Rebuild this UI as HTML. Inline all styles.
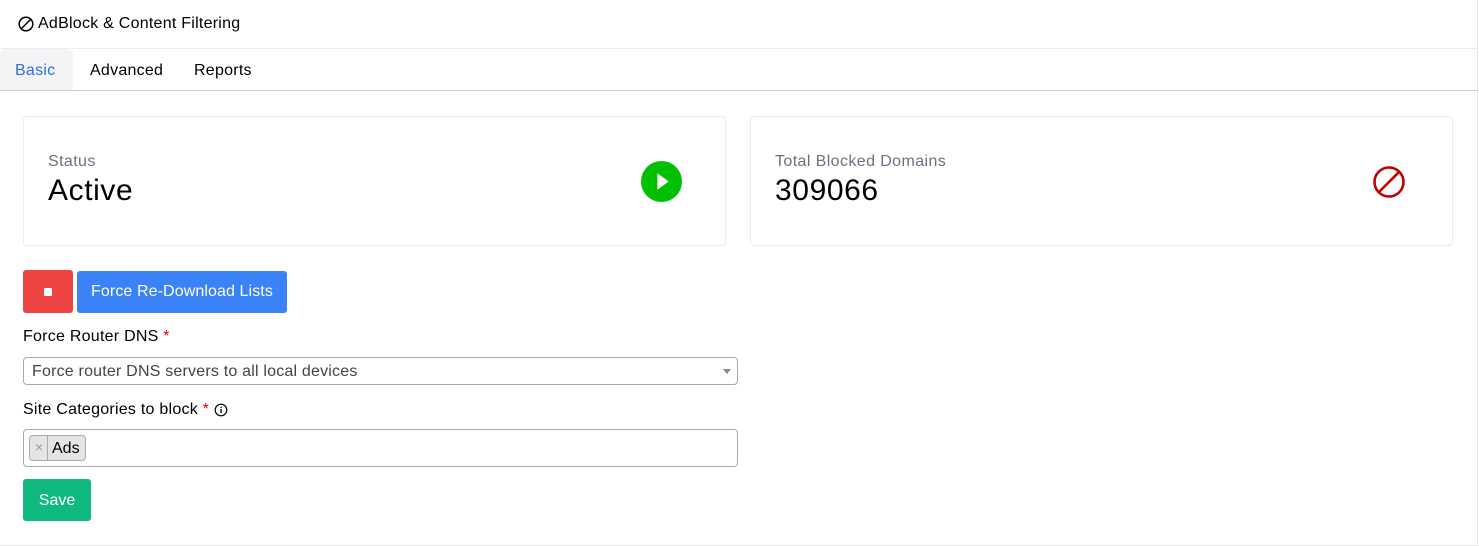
<!DOCTYPE html>
<html><head><style>
*{box-sizing:border-box;margin:0;padding:0}
body{width:1479px;height:546px;background:#fff;font-family:"Liberation Sans",Arial,sans-serif;position:relative;overflow:hidden;color:#000}
.abs{position:absolute}
.card{position:absolute;top:116px;height:130px;border:1px solid #ececec;border-radius:4px;background:#fff}
.lbl{position:absolute;left:24px;top:36px;font-size:16px;color:#6b7280;letter-spacing:.4px}
.val{position:absolute;left:24px;top:57px;font-size:30px;color:#000;letter-spacing:.6px}
.t{letter-spacing:.25px}
</style></head><body>
<div class="abs" style="right:1px;top:0;width:1px;height:546px;background:#e5e5e5"></div>
<div class="abs" style="left:0;top:545px;width:1479px;height:1px;background:#e5e5e5"></div>
<div class="abs t" style="left:18px;top:15px;font-size:16px;display:flex;align-items:center">
<svg width="16" height="16" viewBox="0 0 16 16" style="margin-right:4px"><circle cx="8" cy="8" r="6.8" fill="none" stroke="#000" stroke-width="1.5"/><line x1="3.5" y1="12.5" x2="12.5" y2="3.5" stroke="#000" stroke-width="1.5"/></svg>AdBlock &amp; Content Filtering</div>
<div class="abs" style="left:0;top:48px;width:1478px;height:1px;background:#eee"></div>
<div class="abs" style="left:0;top:49px;width:73px;height:41px;background:#f3f4f6;border-radius:6px 6px 0 0"></div>
<div class="abs" style="left:0;top:90px;width:1478px;height:1px;background:#ccc"></div>
<div class="abs t" style="left:15px;top:62px;font-size:16px;color:#2f6fdf">Basic</div>
<div class="abs t" style="left:90px;top:62px;font-size:16px">Advanced</div>
<div class="abs t" style="left:194px;top:62px;font-size:16px">Reports</div>
<div class="card" style="left:23px;width:703px">
<div class="lbl">Status</div><div class="val">Active</div>
<svg class="abs" style="left:617px;top:44px" width="41" height="41" viewBox="0 0 40 40"><circle cx="20" cy="20" r="20" fill="#00c000"/><path d="M16 12 L27 20 L16 28Z" fill="#fff"/></svg>
</div>
<div class="card" style="left:750px;width:703px">
<div class="lbl">Total Blocked Domains</div><div class="val">309066</div>
<svg class="abs" style="left:621px;top:48px" width="34" height="34" viewBox="0 0 34 34"><circle cx="17" cy="17" r="14.5" fill="none" stroke="#c00000" stroke-width="2.6"/><line x1="7" y1="27" x2="27" y2="7" stroke="#c00000" stroke-width="2.6"/></svg>
</div>
<div class="abs" style="left:23px;top:270px;width:50px;height:43px;background:#ef4444;border-radius:3px"><div class="abs" style="left:21px;top:18px;width:8px;height:8px;background:#fff"></div></div>
<div class="abs" style="left:77px;top:271px;width:210px;height:42px;background:#3b82f6;border-radius:3px;color:#fff;font-size:16px;line-height:42px;text-align:center;letter-spacing:.1px">Force Re-Download Lists</div>
<div class="abs t" style="left:23px;top:328px;font-size:16px">Force Router DNS <span style="color:#e00">*</span></div>
<div class="abs" style="left:23px;top:357px;width:715px;height:28px;border:1px solid #aaa;border-radius:4px;font-size:16px;color:#444;padding:5px 8px;letter-spacing:.2px">Force router DNS servers to all local devices
<div class="abs" style="right:6px;top:11px;width:0;height:0;border-left:4px solid transparent;border-right:4px solid transparent;border-top:5px solid #888"></div></div>
<div class="abs t" style="left:23px;top:401px;font-size:16px;display:flex;align-items:center">Site Categories to block&nbsp;<span style="color:#e00">*</span>
<svg width="14" height="14" viewBox="0 0 14 14" style="margin-left:5px"><circle cx="7" cy="7" r="5.8" fill="none" stroke="#000" stroke-width="1.2"/><rect x="6.4" y="6" width="1.3" height="4" fill="#000"/><rect x="6.4" y="3.8" width="1.3" height="1.3" fill="#000"/></svg></div>
<div class="abs" style="left:23px;top:429px;width:715px;height:38px;border:1px solid #aaa;border-radius:4px"></div>
<div class="abs" style="left:29px;top:435px;width:57px;height:26px;background:#e4e4e4;border:1px solid #aaa;border-radius:4px;font-size:16px">
<span class="abs" style="left:5px;top:3px;color:#999;font-size:14px">×</span>
<div class="abs" style="left:17px;top:0;width:1px;height:24px;background:#aaa"></div>
<span class="abs" style="left:22px;top:4px">Ads</span></div>
<div class="abs" style="left:23px;top:479px;width:68px;height:42px;background:#10b981;border-radius:3px;color:#fff;font-size:16px;line-height:43px;text-align:center">Save</div>
</body></html>
